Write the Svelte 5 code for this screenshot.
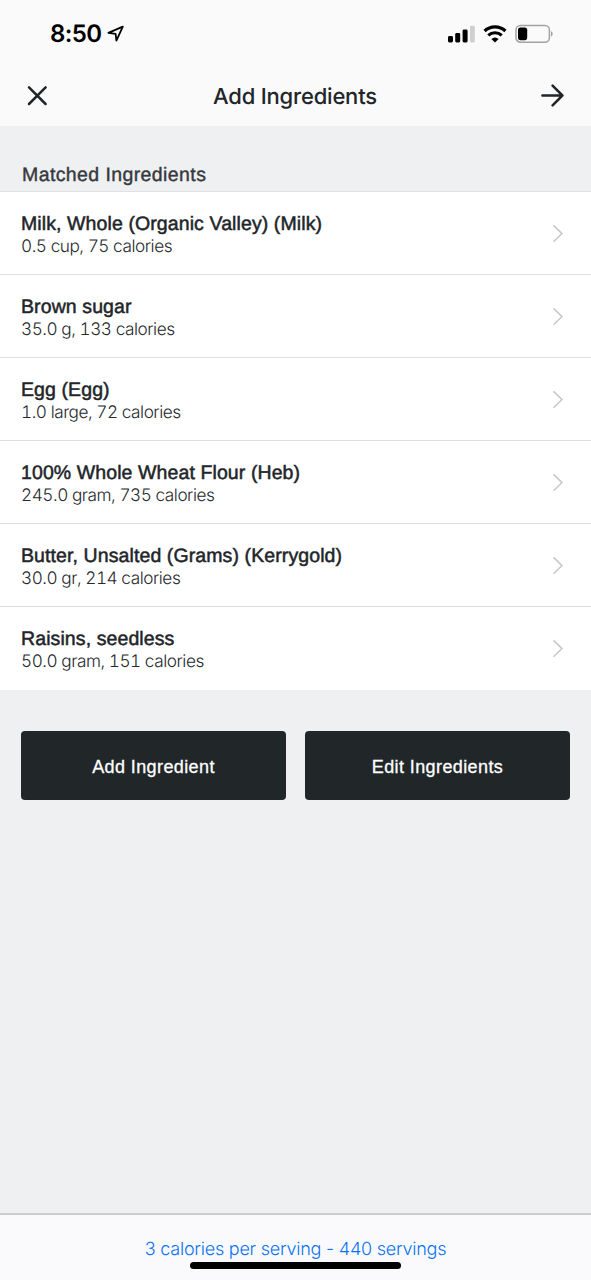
<script>
  /**
   * Add Ingredients screen: matched ingredients with their amounts,
   * list actions and the calories-per-serving footer.
   */

  let ingredients = $state([
    { name: 'Milk, Whole (Organic Valley) (Milk)', amount: '0.5 cup', calories: 75 },
    { name: 'Brown sugar', amount: '35.0 g', calories: 133 },
    { name: 'Egg (Egg)', amount: '1.0 large', calories: 72 },
    { name: '100% Whole Wheat Flour (Heb)', amount: '245.0 gram', calories: 735 },
    { name: 'Butter, Unsalted (Grams) (Kerrygold)', amount: '30.0 gr', calories: 214 },
    { name: 'Raisins, seedless', amount: '50.0 gram', calories: 151 },
  ]);

  let servings = $state(440);
  const total = $derived(ingredients.reduce((sum, i) => sum + i.calories, 0));
  const perServing = $derived(Math.round(total / servings));
</script>

<div class="screen">
  <header>
    <div class="status-bar">
      <div class="clock">
        <span class="time">8:50</span>
        <svg class="location" width="18" height="18" viewBox="0 0 18 18">
          <path d="M15.8 1.6 1.4 7.8l7.2 1.1.8 6.8z" />
        </svg>
      </div>
      <div class="indicators">
        <svg width="27" height="18" viewBox="0 0 27 18">
          <rect x="0" y="11" width="5" height="6.5" rx="1.4" />
          <rect x="7.2" y="8" width="5" height="9.5" rx="1.4" />
          <rect x="14.6" y="4.5" width="5" height="13" rx="1.4" />
          <rect class="faded" x="22" y="0.8" width="4.8" height="16.7" rx="1.4" />
        </svg>
        <svg class="wifi" width="24" height="18" viewBox="0 0 24 18">
          <path class="arc" d="M1.6 6a15 15 0 0 1 20.8 0" />
          <path class="arc" d="M5.3 10.4a9.8 9.8 0 0 1 13.4 0" />
          <path d="M8.4 14a5.4 5.4 0 0 1 7.2 0L12 17.5z" />
        </svg>
        <svg class="battery" width="39" height="20" viewBox="0 0 39 20">
          <rect class="shell" x="1" y="1.4" width="33.4" height="16.8" rx="4.5" />
          <rect x="3" y="3.6" width="9.2" height="12.6" rx="2.6" />
          <path class="tip" d="M36 7.2c2.2.7 2.2 4.5 0 5.2z" />
        </svg>
      </div>
    </div>
    <nav>
      <button class="icon-button" aria-label="Close">
        <svg width="22" height="22" viewBox="0 0 22 22">
          <path d="M3 2.4l16.6 16.6M19.6 2.4 3 19" />
        </svg>
      </button>
      <h1>Add Ingredients</h1>
      <button class="icon-button" aria-label="Next">
        <svg width="24" height="24" viewBox="0 0 24 24">
          <path d="M1.4 11.5h20M11.6 1.7l9.8 9.8-9.8 9.8" />
        </svg>
      </button>
    </nav>
  </header>

  <main>
    <h2>Matched Ingredients</h2>
    <ul>
      {#each ingredients as item}
        <li>
          <div class="text">
            <div class="name">{item.name}</div>
            <div class="detail">{item.amount}, {item.calories} calories</div>
          </div>
          <svg class="chevron" width="12" height="20" viewBox="0 0 12 20">
            <path d="M1.5 1.4 10 9.6l-8.5 8.2" />
          </svg>
        </li>
      {/each}
    </ul>
    <div class="actions">
      <button>Add Ingredient</button>
      <button>Edit Ingredients</button>
    </div>
  </main>

  <footer>
    <span>{perServing} calories per serving - {servings} servings</span>
    <div class="home-indicator"></div>
  </footer>
</div>

<style>
  :global(body) {
    margin: 0;
  }

  .screen {
    display: flex;
    flex-direction: column;
    width: 591px;
    height: 1280px;
    background: #eff0f2;
    color: #212529;
    font-family: "Liberation Sans", Arial, sans-serif;
    text-rendering: geometricPrecision;
    overflow: hidden;
  }

  header {
    height: 126px;
    background: #fafafa;
  }

  .status-bar {
    display: flex;
    justify-content: space-between;
    height: 66px;
    padding: 1px 37px 0 50px;
    box-sizing: border-box;
  }

  .clock,
  .indicators {
    display: flex;
    align-items: center;
    color: #000;
  }

  .time {
    font: 600 24px/1 Inter, sans-serif;
    letter-spacing: -0.6px;
  }

  .location {
    margin-left: 5px;
    fill: none;
    stroke: #000;
    stroke-width: 1.8;
    stroke-linejoin: round;
  }

  .faded {
    fill: #cfcfcf;
  }

  .wifi {
    margin-left: 8px;
  }

  .arc {
    fill: none;
    stroke: #000;
    stroke-width: 3.2;
  }

  .battery {
    margin-left: 8px;
  }

  .shell {
    fill: none;
    stroke: #a3a3a3;
    stroke-width: 1.5;
  }

  .tip {
    fill: #a3a3a3;
  }

  nav {
    display: flex;
    align-items: center;
    justify-content: space-between;
    height: 60px;
    padding: 0 26px;
  }

  .icon-button {
    display: flex;
    padding: 0;
    border: 0;
    background: none;
  }

  .icon-button svg {
    fill: none;
    stroke: #212529;
    stroke-width: 2.5;
    stroke-linecap: round;
    stroke-linejoin: round;
  }

  h1 {
    margin: 0;
    padding: 1px 0 0 1px;
    font: 500 22px/28px Inter, sans-serif;
    letter-spacing: -0.2px;
  }

  main {
    flex: 1;
  }

  h2 {
    margin: 0;
    height: 65px;
    padding: 37px 22px 0;
    box-sizing: border-box;
    font-size: 19.5px;
    font-weight: 400;
    line-height: 24px;
    letter-spacing: 0.4px;
    color: #36393d;
    -webkit-text-stroke: 0.4px;
  }

  ul {
    margin: 0;
    padding: 0;
    list-style: none;
    background: #fff;
    border-top: 1px solid #e0e1e3;
  }

  li {
    display: flex;
    align-items: center;
    justify-content: space-between;
    height: 83px;
    padding: 2px 27px 0 21px;
    box-sizing: border-box;
    border-bottom: 1px solid #dcdddf;
  }

  li:last-child {
    border-bottom-color: #fff;
  }

  .text {
    padding-top: 2px;
  }

  .name {
    font-size: 19.5px;
    line-height: 23px;
    letter-spacing: 0.1px;
    -webkit-text-stroke: 0.5px;
  }

  .detail {
    font: 300 17.2px/22px Inter, sans-serif;
    font-feature-settings: "tnum";
    letter-spacing: -0.46px;
    color: #26292d;
  }

  .chevron {
    fill: none;
    stroke: #c7c7cc;
    stroke-width: 1.5;
  }

  .actions {
    display: grid;
    grid-template-columns: 1fr 1fr;
    gap: 19px;
    padding: 41px 21px 0;
  }

  .actions button {
    height: 69px;
    padding: 3px 0 0;
    border: 0;
    border-radius: 4px;
    background: #212729;
    color: #fff;
    font: 18px "Liberation Sans", Arial, sans-serif;
    letter-spacing: 0.4px;
    -webkit-text-stroke: 0.3px;
  }

  footer {
    display: flex;
    flex-direction: column;
    align-items: center;
    height: 67px;
    padding-top: 23px;
    box-sizing: border-box;
    background: #fafafc;
    border-top: 2px solid #cccdd1;
    color: #0a73f5;
    font: 300 18px/24px Inter, sans-serif;
    letter-spacing: -0.23px;
  }

  .home-indicator {
    width: 211px;
    height: 7px;
    border-radius: 4px;
    background: #000;
  }
</style>
